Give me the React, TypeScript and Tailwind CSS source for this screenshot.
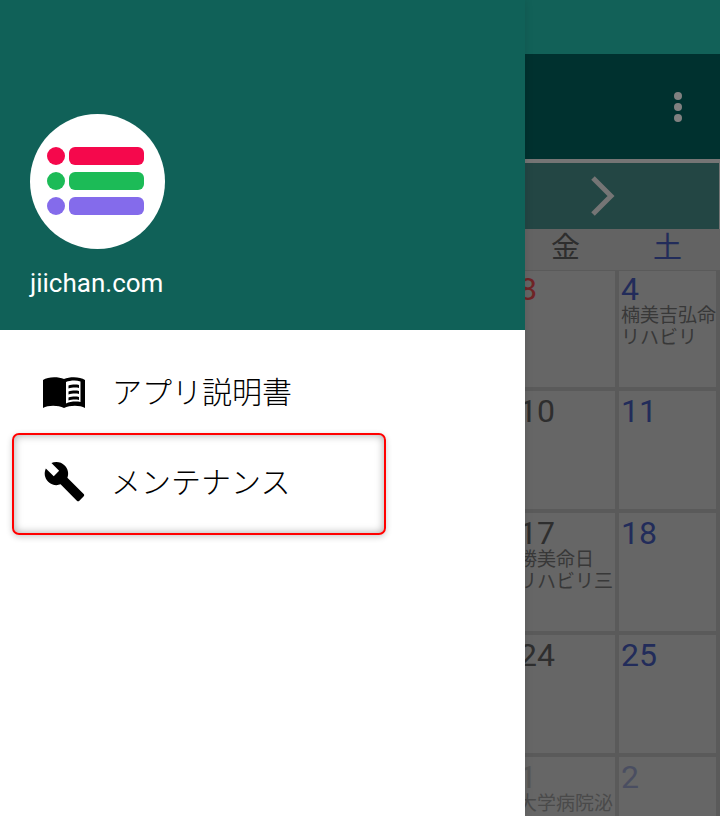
import React from "react";

const font = "font-['Roboto','Noto_Sans_CJK_JP',sans-serif]";

const weeks = [
  { fri: "8", friColor: "text-[#702426]", sat: "4", notes: ["", "楠美吉弘命\nリハビリ"], top: "pt-0" },
  { fri: "10", friColor: "text-[#2e2e2e]", sat: "11", notes: ["", ""], top: "pt-[2px]" },
  { fri: "17", friColor: "text-[#2e2e2e]", sat: "18", notes: ["勝美命日\nリハビリ三", ""], top: "pt-[2px]" },
  { fri: "24", friColor: "text-[#2e2e2e]", sat: "25", notes: ["", ""], top: "pt-[2px]" },
  { fri: "1", friColor: "text-[#4a4a4a]", sat: "2", notes: ["大学病院泌", ""], top: "pt-[2px]", faded: true },
];

const BookIcon = () => (
  <svg viewBox="0 0 42 32" className="w-[42px] h-[32px] shrink-0 fill-black">
    <path
      fillRule="evenodd"
      d="M0 4C5 .5 15 .5 21 3c6-2.500 16-2.500 21 1v28c-5-3-15-3-21 0-6-3-16-3-21 0zM23 6v21.500c4-2 10-2.500 14.500-1.500V5.500C33 4 27 4.500 23 6z"
    />
    <path d="M25.500 9.500c3-1 7.500-1.200 10.500-.5v3c-3-.7-7.500-.5-10.500.5zM25.500 15.500c3-1 7.500-1.200 10.500-.5v3c-3-.7-7.500-.5-10.500.5zM25.500 21.500c3-1 7.500-1.200 10.500-.5v3c-3-.7-7.500-.5-10.500.5z" />
  </svg>
);

const WrenchIcon = () => (
  <svg viewBox="0 0 24 24" className="w-[43px] h-[43px] shrink-0 fill-black">
    <path d="M22.700 19l-9.100-9.100c.9-2.300.4-5-1.500-6.900-2-2-5-2.400-7.400-1.300L9 6 6 9 1.600 4.700C.4 7.100.9 10.100 2.900 12.100c1.900 1.900 4.600 2.400 6.900 1.500l9.100 9.100c.4.400 1 .4 1.400 0l2.300-2.300c.5-.4.500-1.100.1-1.400z" />
  </svg>
);

const Logo = () => (
  <div className="w-[135px] h-[135px] rounded-full bg-white flex flex-col justify-start gap-[7px] pt-[33px] pl-[17px]">
    <div className="flex items-center gap-[4px]">
      <div className="w-[18px] h-[18px] rounded-full bg-[#f5084c]" />
      <div className="w-[75px] h-[18px] rounded-[6px] bg-[#f5084c]" />
    </div>
    <div className="flex items-center gap-[4px]">
      <div className="w-[18px] h-[18px] rounded-full bg-[#1cbb57]" />
      <div className="w-[75px] h-[18px] rounded-[6px] bg-[#1cbb57]" />
    </div>
    <div className="flex items-center gap-[4px]">
      <div className="w-[18px] h-[18px] rounded-full bg-[#846beb]" />
      <div className="w-[75px] h-[18px] rounded-[6px] bg-[#846beb]" />
    </div>
  </div>
);

const Calendar = () => (
  <div className="flex-1 min-w-0 h-full overflow-hidden bg-[#5a5a5a] flex flex-col">
    <div className="h-[54px] shrink-0 bg-[#126158]" />
    <div className="h-[105px] shrink-0 bg-[#00312f] flex items-center justify-end pr-[38px]">
      <div className="flex flex-col gap-[3px]">
        <div className="w-[8px] h-[8px] rounded-full bg-[#808080]" />
        <div className="w-[8px] h-[8px] rounded-full bg-[#808080]" />
        <div className="w-[8px] h-[8px] rounded-full bg-[#808080]" />
      </div>
    </div>
    <div className="h-[4px] shrink-0 bg-[#757575]" />
    <div className="h-[66px] shrink-0 bg-[#234644] border-r border-[#757575] flex items-center pl-[66px]">
      <svg viewBox="0 0 24 40" className="w-[24px] h-[40px]">
        <path d="M2 2l18 18L2 38" fill="none" stroke="#757575" strokeWidth="5" />
      </svg>
    </div>
    <div className="h-[41px] shrink-0 bg-[#636363] flex gap-[4px] ml-[-9px] w-[204px] text-[29px] leading-[38px]">
      <div className="w-[99px] shrink-0 text-center text-[#2e2e2e]">金</div>
      <div className="w-[97px] shrink-0 text-center text-[#222c5a]">土</div>
    </div>
    <div className="flex flex-col gap-[4px] ml-[-9px] w-[204px] mt-[1px]">
      {weeks.map((w, i) => (
        <div key={w.sat} className={`flex gap-[4px] shrink-0 ${i === 0 ? "h-[116px]" : "h-[118px]"}`}>
          <div className={`w-[99px] shrink-0 bg-[#666666] pl-[2px] ${w.top}`}>
            <div
              className={`h-[34px] pl-[1px] text-[32px] leading-[36px] ${w.friColor} ${w.faded ? "opacity-60" : ""}`}
            >
              {w.fri}
            </div>
            <div
              className={`text-[19px] leading-[22px] whitespace-pre text-[#383838] ${w.faded ? "opacity-60" : ""}`}
            >
              {w.notes[0]}
            </div>
          </div>
          <div className={`w-[97px] shrink-0 bg-[#666666] pl-[2px] ${w.top}`}>
            <div className={`h-[34px] text-[32px] leading-[36px] text-[#222c5a] ${w.faded ? "opacity-40" : ""}`}>
              {w.sat}
            </div>
            <div className="text-[19px] leading-[22px] whitespace-pre text-[#383838]">{w.notes[1]}</div>
          </div>
        </div>
      ))}
    </div>
  </div>
);

export default function App() {
  return (
    <div className={`w-[720px] h-[816px] overflow-hidden flex ${font}`}>
      <div className="w-[525px] shrink-0 h-full bg-white flex flex-col shadow-[0_0_8px_rgba(0,0,0,0.12)] z-10">
        <div className="h-[330px] shrink-0 bg-[#106158] flex flex-col pl-[30px] pt-[114px]">
          <Logo />
          <div className="mt-[18px] text-[26px] leading-[33px] text-white">jiichan.com</div>
        </div>
        <div className="flex items-center h-[103px] pl-[43px] pt-[21px] font-light">
          <BookIcon />
          <span className="ml-[27px] text-[30px] text-black">アプリ説明書</span>
        </div>
        <div className="ml-[12px] w-[374px] h-[102px] border-2 border-[#ff0000] rounded-[7px] shadow-[inset_0_0_9px_rgba(0,0,0,0.35),0_2px_6px_rgba(0,0,0,0.2)] flex items-center pl-[29px] pb-[6px] font-light">
          <WrenchIcon />
          <span className="ml-[25px] pt-[2px] text-[30px] text-black">メンテナンス</span>
        </div>
      </div>
      <Calendar />
    </div>
  );
}
